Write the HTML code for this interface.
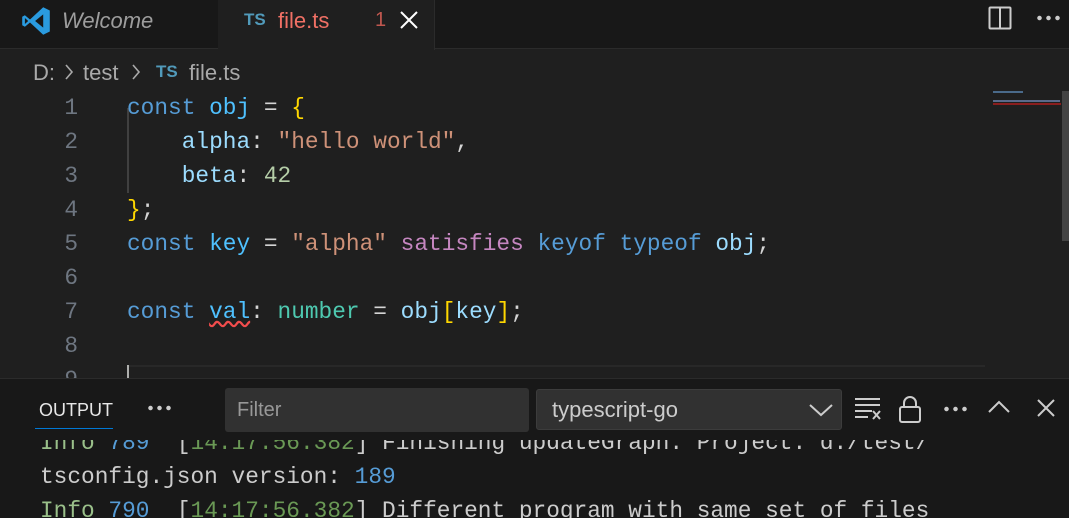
<!DOCTYPE html>
<html><head><meta charset="utf-8"><style>
*{margin:0;padding:0;box-sizing:border-box}
body{width:1069px;height:518px;overflow:hidden;background:#1f1f1f;font-family:"Liberation Sans",sans-serif;position:relative}
.abs{position:absolute}
.tabs{left:0;top:0;width:1069px;height:49px;background:#181818;border-bottom:1px solid #2b2b2b}
.mono{font-family:"Liberation Mono",monospace;font-size:22.8px}
.line{height:34px;line-height:34px;white-space:pre}
.ln{color:#6e7681;width:78px;text-align:right}
.k{color:#569cd6}.v{color:#9cdcfe}.s{color:#ce9178}.n{color:#b5cea8}.p{color:#c586c0}.t{color:#4ec9b0}.y{color:#ffd700}.w{color:#d4d4d4}.b{color:#4fc1ff}
</style></head><body>
<div class="abs tabs"></div>
<div class="abs" style="left:218px;top:0;width:217px;height:50px;background:#1f1f1f;border-right:1px solid #2b2b2b"></div>
<svg class="abs" style="left:21px;top:6px" width="30" height="30" viewBox="0 0 100 100"><path d="M74 4 L96 15 V85 L74 96 L30 55 L13 69 L4 64 V36 L13 31 L30 45 Z M74 28 L47 50 L74 72 Z M13 40 V60 L24 50 Z" fill="#2a9bdf" fill-rule="evenodd"/></svg>
<div class="abs" style="left:62px;top:8px;font-size:22px;font-style:italic;color:#9d9d9d">Welcome</div>
<div class="abs" style="left:244px;top:10px;font-size:17px;font-weight:bold;color:#519aba">TS</div>
<div class="abs" style="left:278px;top:8px;font-size:22px;color:#f07065">file.ts</div>
<div class="abs" style="left:375px;top:9px;font-size:20px;color:#c0574f">1</div>
<svg class="abs" style="left:399px;top:10px" width="20" height="20"><path d="M2 2 L18 18 M18 2 L2 18" stroke="#fff" stroke-width="2"/></svg>
<svg class="abs" style="left:988px;top:6px" width="24" height="24"><rect x="1.5" y="1.5" width="21" height="21" rx="1" fill="none" stroke="#ccc" stroke-width="2"/><path d="M12 2 V22" stroke="#ccc" stroke-width="2"/></svg>
<div class="abs" style="left:1035px;top:15px;width:26px;height:6px;background:radial-gradient(circle,#ccc 2px,transparent 2.5px) 0 0/9px 6px repeat-x"></div>
<div class="abs" style="left:33px;top:60px;font-size:22px;color:#a9a9a9">D:</div>
<svg class="abs" style="left:63px;top:62px" width="12" height="20"><path d="M3 3 L9 10 L3 17" stroke="#a9a9a9" stroke-width="1.6" fill="none"/></svg>
<div class="abs" style="left:83px;top:60px;font-size:22px;color:#a9a9a9">test</div>
<svg class="abs" style="left:130px;top:62px" width="12" height="20"><path d="M3 3 L9 10 L3 17" stroke="#a9a9a9" stroke-width="1.6" fill="none"/></svg>
<div class="abs" style="left:156px;top:62px;font-size:17px;font-weight:bold;color:#519aba">TS</div>
<div class="abs" style="left:189px;top:60px;font-size:22px;color:#a9a9a9">file.ts</div>
<div class="abs" style="left:127px;top:108px;width:2px;height:85px;background:#404040"></div>
<div class="abs" style="left:127px;top:365px;width:858px;height:2px;background:#282828"></div>
<div class="abs" style="left:127px;top:365px;width:2px;height:14px;background:#aeafad"></div>
<div class="abs mono ln" style="left:0;top:91px"><div class="line">1</div><div class="line">2</div><div class="line">3</div><div class="line">4</div><div class="line">5</div><div class="line">6</div><div class="line">7</div><div class="line">8</div><div class="line">9</div></div>
<div class="abs mono" style="left:127px;top:91px"><div class="line"><span class="k">const</span> <span class="b">obj</span> <span class="w">=</span> <span class="y">{</span></div><div class="line">    <span class="v">alpha</span><span class="w">:</span> <span class="s">"hello world"</span><span class="w">,</span></div><div class="line">    <span class="v">beta</span><span class="w">:</span> <span class="n">42</span></div><div class="line"><span class="y">}</span><span class="w">;</span></div><div class="line"><span class="k">const</span> <span class="b">key</span> <span class="w">=</span> <span class="s">"alpha"</span> <span class="p">satisfies</span> <span class="k">keyof</span> <span class="k">typeof</span> <span class="v">obj</span><span class="w">;</span></div><div class="line"> </div><div class="line"><span class="k">const</span> <span class="b" style="text-decoration:underline wavy #f14c4c">val</span><span class="w">:</span> <span class="t">number</span> <span class="w">=</span> <span class="v">obj</span><span class="y">[</span><span class="v">key</span><span class="y">]</span><span class="w">;</span></div></div>
<div class="abs" style="left:993px;top:91px;width:30px;height:2px;background:#4a6a8a"></div>
<div class="abs" style="left:993px;top:100px;width:67px;height:2px;background:#5a6a8a"></div>
<div class="abs" style="left:993px;top:103px;width:68px;height:2px;background:#8b1e1e"></div>
<div class="abs" style="left:1062px;top:91px;width:7px;height:150px;background:#434343"></div>
<div class="abs" style="left:0;top:378px;width:1069px;height:140px;background:#181818;border-top:1px solid #2b2b2b"></div>
<div class="abs" style="left:39px;top:400px;font-size:18px;color:#e7e7e7">OUTPUT</div>
<div class="abs" style="left:35px;top:428px;width:78px;height:1px;background:#0078d4"></div>
<div class="abs" style="left:146px;top:405px;width:26px;height:6px;background:radial-gradient(circle,#ccc 2px,transparent 2.5px) 0 0/9px 6px repeat-x"></div>
<div class="abs" style="left:225px;top:388px;width:304px;height:44px;background:#313131;border-radius:3px;font-size:20px;color:#989898;padding:11px 12px">Filter</div>
<div class="abs" style="left:536px;top:389px;width:306px;height:41px;background:#313131;border:1px solid #3c3c3c;border-radius:3px;font-size:22px;color:#ccc;padding:7px 15px">typescript-go</div>
<svg class="abs" style="left:806px;top:400px" width="36" height="20"><path d="M4 5 L15 15 L26 5" stroke="#ccc" stroke-width="2" fill="none"/></svg>
<svg class="abs" style="left:854px;top:396px" width="30" height="26"><path d="M1 3H26M1 9H26M1 15H18M1 21H14" stroke="#ccc" stroke-width="2"/><path d="M19 15L26 23M26 15L19 23" stroke="#ccc" stroke-width="2"/></svg>
<svg class="abs" style="left:898px;top:395px" width="26" height="30"><rect x="2" y="12" width="20" height="15" rx="2" fill="none" stroke="#ccc" stroke-width="2"/><path d="M6 12V8a6 6 0 0 1 12 0v4" fill="none" stroke="#ccc" stroke-width="2"/></svg>
<div class="abs" style="left:942px;top:406px;width:26px;height:6px;background:radial-gradient(circle,#ccc 2px,transparent 2.5px) 0 0/9px 6px repeat-x"></div>
<svg class="abs" style="left:987px;top:398px" width="24" height="20"><path d="M2 14 L12 4 L22 14" stroke="#ccc" stroke-width="2" fill="none"/></svg>
<svg class="abs" style="left:1036px;top:398px" width="20" height="20"><path d="M2 2 L18 18 M18 2 L2 18" stroke="#ccc" stroke-width="2"/></svg>
<div class="abs" style="left:0;top:440px;width:1069px;height:78px;overflow:hidden"><div class="abs mono" style="left:40px;top:-14px;color:#ccc"><div class="line"><span style="color:#9ac08a">Info</span> <span class="k">789</span>  [<span style="color:#6a9955">14:17:56.382</span>] Finishing updateGraph: Project: d:/test/</div><div class="line">tsconfig.json version: <span class="k">189</span></div><div class="line"><span style="color:#9ac08a">Info</span> <span class="k">790</span>  [<span style="color:#6a9955">14:17:56.382</span>] Different program with same set of files</div></div></div>
</body></html>
